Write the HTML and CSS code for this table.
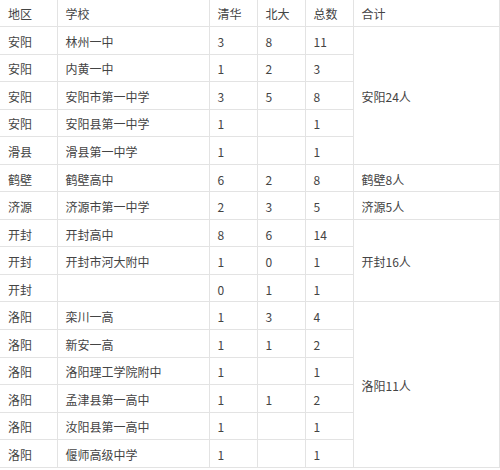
FILE: index.html
```html
<!DOCTYPE html>
<html lang="zh">
<head>
<meta charset="utf-8">
<title>录取统计</title>
<link rel="stylesheet" href="styles.css">
</head>
<body>
<table class="stats">
  <colgroup>
    <col class="c-area"><col class="c-school"><col class="c-num"><col class="c-num"><col class="c-num"><col class="c-sum">
  </colgroup>
  <thead>
    <tr class="head"><td>地区</td><td>学校</td><td>清华</td><td>北大</td><td>总数</td><td>合计</td></tr>
  </thead>
  <tbody>
    <tr><td>安阳</td><td>林州一中</td><td>3</td><td>8</td><td>11</td><td rowspan="5">安阳24人</td></tr>
    <tr><td>安阳</td><td>内黄一中</td><td>1</td><td>2</td><td>3</td></tr>
    <tr><td>安阳</td><td>安阳市第一中学</td><td>3</td><td>5</td><td>8</td></tr>
    <tr><td>安阳</td><td>安阳县第一中学</td><td>1</td><td></td><td>1</td></tr>
    <tr><td>滑县</td><td>滑县第一中学</td><td>1</td><td></td><td>1</td></tr>
    <tr><td>鹤壁</td><td>鹤壁高中</td><td>6</td><td>2</td><td>8</td><td>鹤壁8人</td></tr>
    <tr><td>济源</td><td>济源市第一中学</td><td>2</td><td>3</td><td>5</td><td>济源5人</td></tr>
    <tr><td>开封</td><td>开封高中</td><td>8</td><td>6</td><td>14</td><td rowspan="3">开封16人</td></tr>
    <tr><td>开封</td><td>开封市河大附中</td><td>1</td><td>0</td><td>1</td></tr>
    <tr><td>开封</td><td></td><td>0</td><td>1</td><td>1</td></tr>
    <tr><td>洛阳</td><td>栾川一高</td><td>1</td><td>3</td><td>4</td><td rowspan="6">洛阳11人</td></tr>
    <tr><td>洛阳</td><td>新安一高</td><td>1</td><td>1</td><td>2</td></tr>
    <tr><td>洛阳</td><td>洛阳理工学院附中</td><td>1</td><td></td><td>1</td></tr>
    <tr><td>洛阳</td><td>孟津县第一高中</td><td>1</td><td>1</td><td>2</td></tr>
    <tr><td>洛阳</td><td>汝阳县第一高中</td><td>1</td><td></td><td>1</td></tr>
    <tr><td>洛阳</td><td>偃师高级中学</td><td>1</td><td></td><td>1</td></tr>
  </tbody>
</table>
</body>
</html>
```
FILE: styles.css
```css
html, body {
  margin: 0;
  padding: 0;
  background: #ffffff;
}
.stats {
  border-collapse: collapse;
  table-layout: fixed;
  width: 499px;
  font-family: "Noto Sans CJK SC", "Noto Sans", sans-serif;
  font-size: 12px;
  color: #444444;
}
.c-area { width: 57px; }
.c-school { width: 152px; }
.c-num { width: 48px; }
.c-sum { width: 146px; }
.stats td {
  border: 1px solid #e3e3e3;
  padding: 0 0 0 8px;
  text-align: left;
  vertical-align: middle;
  line-height: 16px;
  white-space: nowrap;
}
.stats tr td:first-child { border-left: none; }
.stats thead td { border-top: none; }
.stats tr.head { height: 26.5px; }
.stats tbody tr { height: 27.56px; }
.stats tbody td { padding-top: 3px; }
.stats thead td { padding-top: 2px; }
```
